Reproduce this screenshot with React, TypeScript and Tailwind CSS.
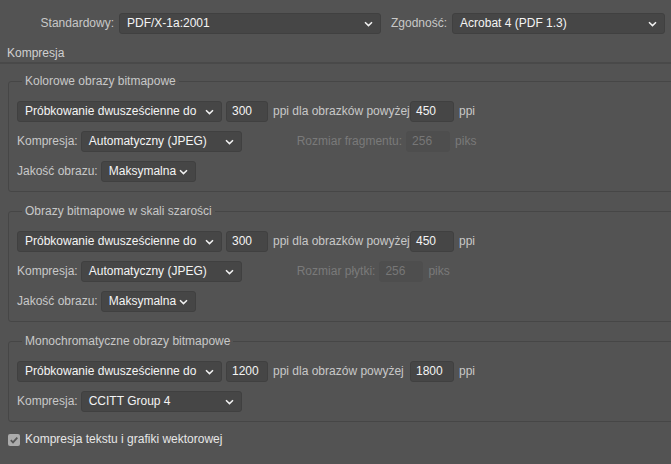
import React from "react";

function Chevron() {
  return (
    <svg width="9" height="6" viewBox="0 0 9 6" className="shrink-0">
      <path d="M1 1.2 L4.5 4.6 L8 1.2" fill="none" stroke="#f2f2f2" strokeWidth="1.5" />
    </svg>
  );
}

function Select({ value, className }: { value: string; className: string }) {
  return (
    <div
      className={`h-[21px] flex items-center justify-between pl-[7px] pr-[7px] rounded-[3px] bg-[#464646] border border-[#404040] text-[#f4f4f4] whitespace-nowrap ${className}`}
    >
      <span>{value}</span>
      <Chevron />
    </div>
  );
}

function Input({ value, className, disabled }: { value: string; className: string; disabled?: boolean }) {
  return (
    <div
      className={`h-[21px] flex items-center pl-[5px] rounded-[3px] border whitespace-nowrap ${
        disabled ? "bg-[#4e4e4e] border-[#4e4e4e] text-[#777777]" : "bg-[#464646] border-[#404040] text-[#f4f4f4]"
      } ${className}`}
    >
      {value}
    </div>
  );
}

function Group({
  title,
  first,
  mid,
  tileLabel,
  compression,
  quality,
}: {
  title: string;
  first: [string, string];
  mid: string;
  tileLabel?: string;
  compression: string;
  quality?: boolean;
}) {
  return (
    <fieldset className="ml-[8px] mr-[-20px] border border-[#464646] rounded-[3px] pl-[8px] pt-[12px] pb-[9px]">
      <legend className="ml-[5px] px-[3px] leading-[15px] text-[#c8c8c8]">{title}</legend>
      <div className="flex flex-col gap-[9px]">
        <div className="flex items-center h-[21px]">
          <Select value="Próbkowanie dwusześcienne do" className="w-[205px]" />
          <Input value={first[0]} className="ml-[4px] w-[42px]" />
          <span className="ml-[5px] w-[137px] whitespace-nowrap">{mid}</span>
          <Input value={first[1]} className="w-[44px]" />
          <span className="ml-[5px]">ppi</span>
        </div>
        <div className="flex items-center h-[21px]">
          <span>Kompresja:</span>
          <Select value={compression} className="ml-[3px] w-[161px]" />
          {tileLabel && (
            <>
              <span className="ml-[55px] text-[#7a7a7a] whitespace-nowrap">{tileLabel}</span>
              <Input value="256" disabled className="ml-[4px] w-[44px]" />
              <span className="ml-[5px] text-[#7a7a7a]">piks</span>
            </>
          )}
        </div>
        {quality && (
          <div className="flex items-center h-[21px]">
            <span>Jakość obrazu:</span>
            <Select value="Maksymalna" className="ml-[3px] w-[95px]" />
          </div>
        )}
      </div>
    </fieldset>
  );
}

export default function App() {
  return (
    <div className="w-[671px] h-[464px] bg-[#535353] overflow-hidden font-['Liberation_Sans',Arial,sans-serif] text-[12px] leading-[15px] text-[#c8c8c8]">
      <div className="flex items-center h-[21px] pt-[13px] box-content">
        <span className="w-[114px] text-right">Standardowy:</span>
        <Select value="PDF/X-1a:2001" className="ml-[5px] w-[262px]" />
        <span className="ml-[10px]">Zgodność:</span>
        <Select value="Acrobat 4 (PDF 1.3)" className="ml-[5px] w-[213px]" />
      </div>
      <div className="mt-[12px] ml-[7px] text-[#d0d0d0]">Kompresja</div>
      <div className="mt-[1px] h-[2px] bg-[#494949]" />
      <div className="mt-[10px]">
        <Group
          title="Kolorowe obrazy bitmapowe"
          first={["300", "450"]}
          mid="ppi dla obrazków powyżej"
          tileLabel="Rozmiar fragmentu:"
          compression="Automatyczny (JPEG)"
          quality
        />
      </div>
      <div className="mt-[12px]">
        <Group
          title="Obrazy bitmapowe w skali szarości"
          first={["300", "450"]}
          mid="ppi dla obrazków powyżej"
          tileLabel="Rozmiar płytki:"
          compression="Automatyczny (JPEG)"
          quality
        />
      </div>
      <div className="mt-[12px]">
        <Group
          title="Monochromatyczne obrazy bitmapowe"
          first={["1200", "1800"]}
          mid="ppi dla obrazów powyżej"
          compression="CCITT Group 4"
        />
      </div>
      <div className="mt-[10px] ml-[8px] flex items-center gap-[5px]">
        <div className="w-[12px] h-[12px] rounded-[2px] bg-[#ababab] flex items-center justify-center">
          <svg width="10" height="10" viewBox="0 0 10 10">
            <path d="M1.8 5.2 L4 7.4 L8.3 2.6" fill="none" stroke="#555555" strokeWidth="1.8" />
          </svg>
        </div>
        <span className="text-[#e6e6e6]">Kompresja tekstu i grafiki wektorowej</span>
      </div>
    </div>
  );
}
